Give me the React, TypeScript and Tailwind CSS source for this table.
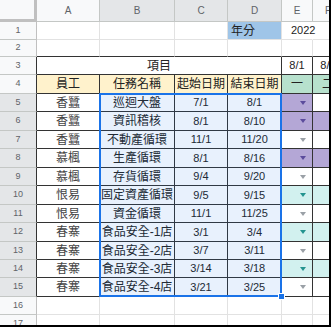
import React from 'react';

type Fill = 'p' | 'c' | 'w';

interface TaskRow {
  n: number;
  h: string;
  who: string;
  task: string;
  start: string;
  end: string;
  e: Fill;
  f: Fill;
}

const tasks: TaskRow[] = [
  { n: 5, h: 'h-[18px]', who: '香蠶', task: '巡迴大盤', start: '7/1', end: '8/1', e: 'p', f: 'w' },
  { n: 6, h: 'h-[19px]', who: '香蠶', task: '資訊稽核', start: '8/1', end: '8/10', e: 'p', f: 'p' },
  { n: 7, h: 'h-[18px]', who: '香蠶', task: '不動產循環', start: '11/1', end: '11/20', e: 'w', f: 'w' },
  { n: 8, h: 'h-[19px]', who: '慕楓', task: '生產循環', start: '8/1', end: '8/16', e: 'p', f: 'p' },
  { n: 9, h: 'h-[18px]', who: '慕楓', task: '存貨循環', start: '9/4', end: '9/20', e: 'w', f: 'w' },
  { n: 10, h: 'h-[19px]', who: '恨易', task: '固定資產循環', start: '9/5', end: '9/15', e: 'c', f: 'c' },
  { n: 11, h: 'h-[18px]', who: '恨易', task: '資金循環', start: '11/1', end: '11/25', e: 'w', f: 'w' },
  { n: 12, h: 'h-[19px]', who: '春寨', task: '食品安全-1店', start: '3/1', end: '3/4', e: 'c', f: 'c' },
  { n: 13, h: 'h-[18px]', who: '春寨', task: '食品安全-2店', start: '3/7', end: '3/11', e: 'w', f: 'w' },
  { n: 14, h: 'h-[18px]', who: '春寨', task: '食品安全-3店', start: '3/14', end: '3/18', e: 'c', f: 'c' },
  { n: 15, h: 'h-[19px]', who: '春寨', task: '食品安全-4店', start: '3/21', end: '3/25', e: 'w', f: 'w' },
];

const fillBg: Record<Fill, string> = {
  p: 'bg-[#b4a7d6]',
  c: 'bg-[#d2f1ef]',
  w: 'bg-white',
};

const arrowColor: Record<Fill, string> = {
  p: 'border-t-[#5b4b9c]',
  c: 'border-t-[#23948f]',
  w: 'border-t-[#9aa0a6]',
};

const font = "font-['Liberation_Sans','Noto_Sans_CJK_TC',sans-serif]";

const RowHead = ({ n, dark, sel }: { n: number; dark?: boolean; sel?: boolean }) => (
  <div
    className={`w-[37px] shrink-0 h-full flex items-center justify-center text-[9px] text-[#5f6368] border-b border-b-[#c4c7c5] border-r ${
      dark ? 'border-r-[#333]' : 'border-r-[#c0c0c0]'
    } ${sel ? 'bg-[#e4e6e8]' : 'bg-[#f8f9fa]'}`}
  >
    {n}
  </div>
);

const Arrow = ({ fill }: { fill: Fill }) => (
  <div className={`w-0 h-0 border-l-[3.5px] border-r-[3.5px] border-t-[4px] border-l-transparent border-r-transparent ${arrowColor[fill]}`} />
);

const DropCell = ({ fill, w }: { fill: Fill; w: string }) => (
  <div className={`${w} shrink-0 h-full flex items-center justify-end pr-[6px] border-r border-b border-[#333] ${fillBg[fill]}`}>
    <Arrow fill={fill} />
  </div>
);

const blank = 'shrink-0 h-full border-r border-b';

export default function App() {
  return (
    <div className={`w-[331px] h-[327px] overflow-hidden bg-white border-r-2 border-b-2 border-black text-[#222] ${font}`}>
      <div className="relative w-[400px]">
        {/* column headers */}
        <div className="flex h-[22px]">
          <div className="w-[37px] shrink-0 h-full bg-[#f8f9fa] border-r-[3px] border-b-[3px] border-[#c0c0c0]" />
          {[
            ['A', 'w-[63px]', false],
            ['B', 'w-[75px]', true],
            ['C', 'w-[53px]', true],
            ['D', 'w-[54px]', true],
            ['E', 'w-[31px]', false],
            ['F', 'w-[31px]', false],
            ['G', 'w-[60px]', false],
          ].map(([l, w, sel]) => (
            <div
              key={l as string}
              className={`${w} shrink-0 h-full flex items-center justify-center text-[10px] text-[#5f6368] border-r border-b border-[#c4c7c5] ${
                sel ? 'bg-[#e4e6e8]' : 'bg-[#f8f9fa]'
              }`}
            >
              {l}
            </div>
          ))}
        </div>

        {/* row 1 */}
        <div className="flex h-[18px]">
          <RowHead n={1} />
          <div className={`w-[63px] ${blank} border-[#e2e2e2]`} />
          <div className={`w-[75px] ${blank} border-[#e2e2e2]`} />
          <div className={`w-[53px] ${blank} border-[#e2e2e2]`} />
          <div className={`w-[54px] ${blank} border-r-[#e2e2e2] border-b-[#e2e2e2] bg-[#9fc5e8] flex items-center pl-[3px] text-[12px]`}>
            年分
          </div>
          <div className={`w-[31px] ${blank} border-r-transparent border-b-[#e2e2e2] flex items-center pl-[9px] text-[11px] whitespace-nowrap overflow-visible`}>
            2022
          </div>
          <div className={`w-[31px] ${blank} border-[#e2e2e2]`} />
          <div className={`w-[60px] ${blank} border-[#e2e2e2]`} />
        </div>

        {/* row 2 */}
        <div className="flex h-[17px]">
          <RowHead n={2} />
          <div className={`w-[63px] ${blank} border-r-[#e2e2e2] border-b-[#333]`} />
          <div className={`w-[75px] ${blank} border-r-[#e2e2e2] border-b-[#333]`} />
          <div className={`w-[53px] ${blank} border-r-[#e2e2e2] border-b-[#333]`} />
          <div className={`w-[54px] ${blank} border-r-[#e2e2e2] border-b-[#333]`} />
          <div className={`w-[31px] ${blank} border-r-[#e2e2e2] border-b-[#333]`} />
          <div className={`w-[31px] ${blank} border-r-[#e2e2e2] border-b-[#333]`} />
          <div className={`w-[60px] ${blank} border-[#e2e2e2]`} />
        </div>

        {/* row 3 */}
        <div className="flex h-[18px]">
          <RowHead n={3} dark />
          <div className={`w-[245px] ${blank} border-[#333] flex items-center justify-center text-[12px]`}>項目</div>
          <div className={`w-[31px] ${blank} border-[#333] flex items-center justify-center text-[11px]`}>8/1</div>
          <div className={`w-[31px] ${blank} border-[#333] flex items-center justify-center text-[11px]`}>8/2</div>
          <div className={`w-[60px] ${blank} border-r-[#e2e2e2] border-b-[#e2e2e2]`} />
        </div>

        {/* row 4 */}
        <div className="flex h-[19px] text-[12px]">
          <RowHead n={4} dark />
          <div className={`w-[63px] ${blank} border-[#333] bg-[#fff2cc] flex items-center justify-center`}>員工</div>
          <div className={`w-[75px] ${blank} border-[#333] bg-[#fff2cc] flex items-center justify-center`}>任務名稱</div>
          <div className={`w-[53px] ${blank} border-[#333] bg-[#fff2cc] flex items-center justify-center`}>起始日期</div>
          <div className={`w-[54px] ${blank} border-[#333] bg-[#fff2cc] flex items-center justify-center`}>結束日期</div>
          <div className={`w-[31px] ${blank} border-[#333] bg-[#b7e1cd] flex items-center justify-center`}>一</div>
          <div className={`w-[31px] ${blank} border-[#333] bg-[#b7e1cd] flex items-center justify-center`}>二</div>
          <div className={`w-[60px] ${blank} border-r-[#e2e2e2] border-b-[#e2e2e2]`} />
        </div>

        {/* task rows */}
        {tasks.map(t => (
          <div key={t.n} className={`flex ${t.h}`}>
            <RowHead n={t.n} dark sel />
            <div className={`w-[63px] ${blank} border-[#333] flex items-center justify-center text-[12px] text-[#444]`}>{t.who}</div>
            <div className={`w-[75px] ${blank} border-[#333] flex items-center justify-center text-[12px] whitespace-nowrap`}>{t.task}</div>
            <div className={`w-[53px] ${blank} border-[#333] flex items-center justify-center text-[11px]`}>{t.start}</div>
            <div className={`w-[54px] ${blank} border-[#333] flex items-center justify-center text-[11px]`}>{t.end}</div>
            <DropCell fill={t.e} w="w-[31px]" />
            <DropCell fill={t.f} w="w-[31px]" />
            <div className={`w-[60px] ${blank} border-r-[#e2e2e2] border-b-[#e2e2e2]`} />
          </div>
        ))}

        {/* rows 16-17 */}
        {[16, 17].map(n => (
          <div key={n} className="flex h-[18px]">
            <RowHead n={n} />
            <div className={`w-[63px] ${blank} border-[#e2e2e2]`} />
            <div className={`w-[75px] ${blank} border-[#e2e2e2]`} />
            <div className={`w-[53px] ${blank} border-[#e2e2e2]`} />
            <div className={`w-[54px] ${blank} border-[#e2e2e2]`} />
            <div className={`w-[31px] ${blank} border-[#e2e2e2]`} />
            <div className={`w-[31px] ${blank} border-[#e2e2e2]`} />
            <div className={`w-[60px] ${blank} border-[#e2e2e2]`} />
          </div>
        ))}

        {/* selection B5:D15 */}
        <div className="absolute left-[99px] top-[93px] w-[183px] h-[204px] border-2 border-[#1a73e8] bg-[#1a73e8]/10 pointer-events-none" />
        <div className="absolute left-[278px] top-[293px] w-[7px] h-[7px] bg-[#1a73e8] border border-white" />
      </div>
    </div>
  );
}
